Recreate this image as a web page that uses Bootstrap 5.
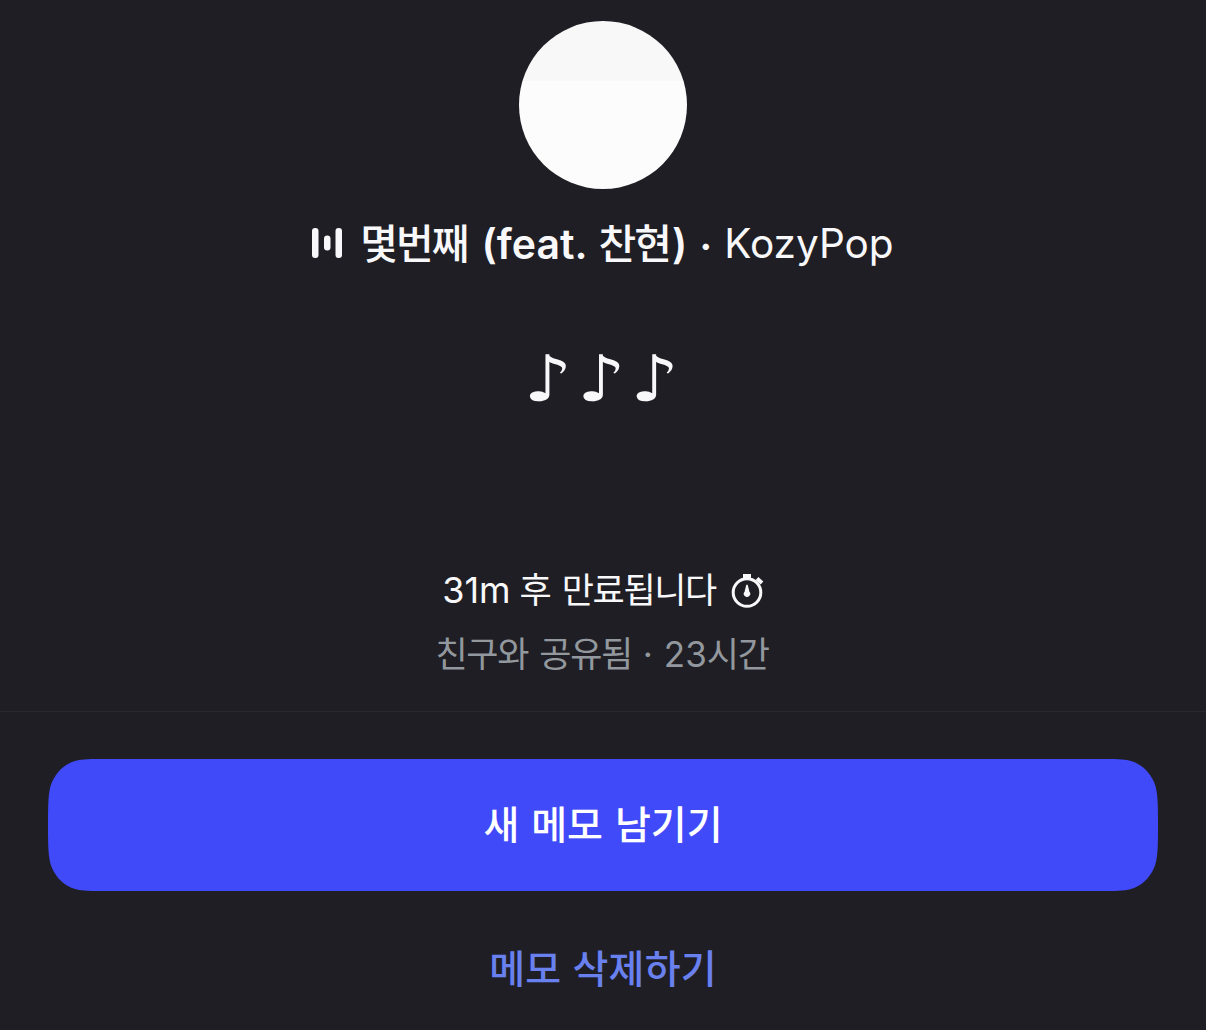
<!DOCTYPE html>
<html lang="ko">
<head>
<meta charset="utf-8">
<meta name="viewport" content="width=device-width, initial-scale=1">
<title>메모</title>
<link rel="stylesheet" href="https://cdn.jsdelivr.net/npm/bootstrap@5.3.0/dist/css/bootstrap.min.css">
<style>
body{background:#1f1e24;color:#f8f8fa;font-family:Inter,"Noto Sans CJK KR",sans-serif;height:1030px;overflow:hidden}
.ko{font-family:"Noto Sans CJK KR",sans-serif}
.line .ko{padding-bottom:5px}
.avatar{width:168px;height:168px;margin-top:21px;background:linear-gradient(#f8f8f8 60px,#fcfcfc 60px)}
.line{white-space:pre;display:flex;align-items:center;justify-content:center}
.track{height:60px;margin-top:24px;font-size:41px;line-height:60px}
.track .ko{font-weight:500;letter-spacing:-2px}
.track .latin{font-weight:600;padding-top:1px}
.notes{height:80px;margin-top:66px;font-family:"DejaVu Sans",sans-serif;font-size:64px;line-height:80px}
.notes span{letter-spacing:4px;padding-left:1px;transform:scaleX(1.19)}
.expiry{height:50px;margin-top:146px;font-size:35px;line-height:50px}
.shared{height:50px;margin-top:14px;font-size:35px;line-height:50px;color:#92989d}
.expiry .ko,.shared .ko{letter-spacing:-1.4px}
.actions{margin-top:32px;border-top:1px solid #29282e;padding:47px 48px 0}
.btn-memo,.btn-memo:hover{height:132px;border:0;border-radius:0;background:#404af8;color:#fff;font-size:39px;font-weight:500;padding:0 0 5px;
clip-path:path("M0 66C0 46 0 32 4 23C9 12 17 5 27 2C35 0 43 0 56 0H1054C1067 0 1075 0 1083 2C1093 5 1101 12 1106 23C1110 32 1110 46 1110 66S1110 100 1106 109C1101 120 1093 127 1083 130C1075 132 1067 132 1054 132H56C43 132 35 132 27 130C17 127 9 120 4 109C0 100 0 86 0 66Z")}
.btn-memo span{letter-spacing:0;word-spacing:1px}
.btn-delete,.btn-delete:hover{height:60px;margin-top:45px;padding:0;border:0;color:#6980ef;font-size:39px;font-weight:500;letter-spacing:.2px}
</style>
</head>
<body>
<main class="d-flex flex-column">
  <div class="avatar rounded-circle mx-auto"></div>
  <div class="line track">
    <svg width="31" height="30" viewBox="0 0 31 30" fill="currentColor" aria-hidden="true"><rect width="6.5" height="30" rx="3"/><rect x="12" y="7.5" width="6.5" height="15" rx="3.2"/><rect x="23.5" width="6.5" height="30" rx="3"/></svg>
    <span class="ko" style="margin-left:17px">몇번째</span>
    <span class="latin" style="margin-left:14px">(feat.</span>
    <span class="ko" style="margin-left:11px">찬현</span>
    <span class="latin" style="margin-left:2px">)</span>
    <span class="latin" style="margin-left:12px;padding-top:5px">·</span>
    <span style="margin-left:12px;padding-top:1px;font-size:40.5px">KozyPop</span>
  </div>
  <div class="line notes"><span>♪♪♪</span></div>
  <div class="line expiry">
    <span style="font-size:36px">31m</span>
    <span class="ko" style="margin-left:9px">후<span style="margin-left:3px"> 만료됩니다</span></span>
    <svg style="margin-left:15px" width="33" height="36" viewBox="0 0 33 36" fill="none" stroke="currentColor" stroke-width="3" aria-hidden="true"><circle cx="16" cy="20.5" r="13.8"/><path d="M12 4h8M26 6.5l5 4.5" stroke-width="4"/><path d="M16 13l1.8 7a2.5 2.5 0 1 1-3.6 0Z" fill="currentColor" stroke-width="1.4"/></svg>
  </div>
  <div class="line shared" style="padding-right:2px"><span class="ko">친구와<span style="margin-left:3px"> 공유됨</span></span><span style="margin-left:11px">·</span><span style="margin-left:11px">23</span><span class="ko">시간</span></div>
  <section class="actions d-flex flex-column">
    <button class="btn btn-primary btn-memo w-100 ko" type="button"><span>새 메모 남기기</span></button>
    <button class="btn btn-delete ko mx-auto" type="button">메모 삭제하기</button>
  </section>
</main>
<script src="https://cdn.jsdelivr.net/npm/bootstrap@5.3.0/dist/js/bootstrap.bundle.min.js"></script>
</body>
</html>
